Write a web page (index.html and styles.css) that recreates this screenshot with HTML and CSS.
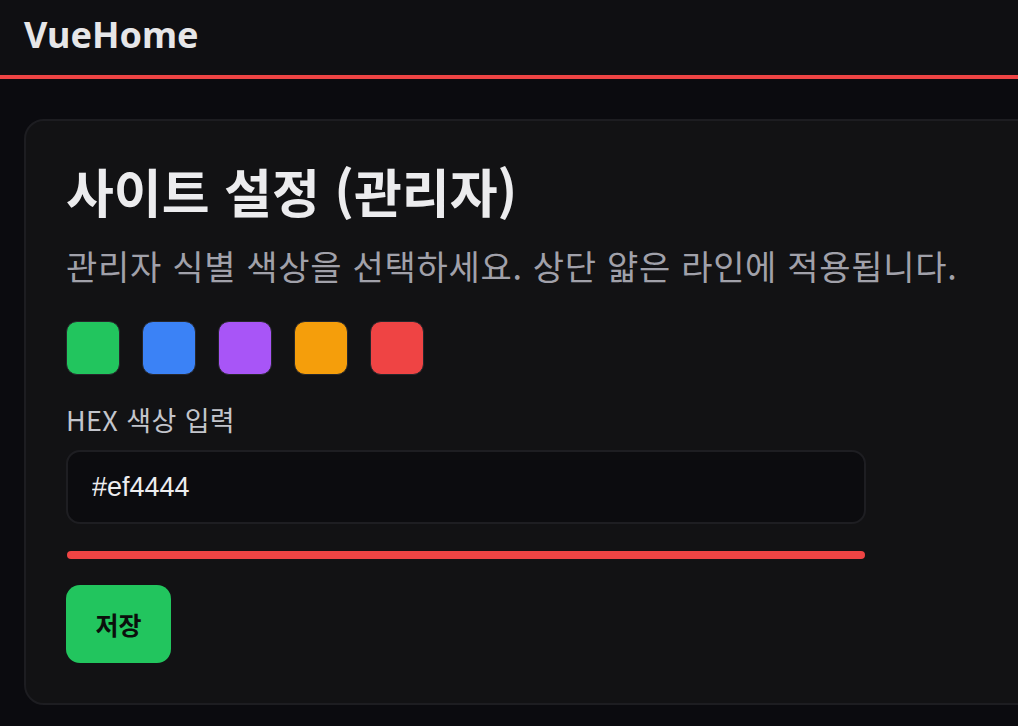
FILE: index.html
```html
<!DOCTYPE html>
<html lang="ko">
<head>
<meta charset="UTF-8" />
<title>VueHome - 사이트 설정</title>
<meta name="viewport" content="width=device-width, initial-scale=1.0">
<link rel="stylesheet" href="styles.css">
</head>
<body>

  <header class="topbar">
    <div class="brand">VueHome</div>
  </header>

  <main class="page">
    <section class="card">
      <h1 class="card-title">사이트 설정 (관리자)</h1>
      <p class="card-desc">관리자 식별 색상을 선택하세요. 상단 얇은 라인에 적용됩니다.</p>

      <div class="swatches">
        <button class="swatch swatch-green" title="#22c55e"></button>
        <button class="swatch swatch-blue" title="#3b82f6"></button>
        <button class="swatch swatch-purple" title="#a855f7"></button>
        <button class="swatch swatch-amber" title="#f59e0b"></button>
        <button class="swatch swatch-red" title="#ef4444"></button>
      </div>

      <label class="field-label" for="hexInput">HEX 색상 입력</label>
      <input class="hex-input" id="hexInput" type="text" value="#ef4444">

      <div class="preview-line"></div>

      <button class="save-btn">저장</button>
    </section>
  </main>

</body>
</html>
```

FILE: styles.css
```css
body {
  margin: 0;
  padding: 0;
  background-color: #0b0b0f;
  color: #e8e8ea;
  font-family: "Noto Sans", "Noto Sans CJK KR", sans-serif;
  overflow: hidden;
}
.topbar {
  height: 75px;
  background-color: #0f0f12;
  border-bottom: 4px solid #ef4444;
  display: flex;
  align-items: center;
  padding: 0 24px;
}
.brand {
  font-family: "Noto Sans", sans-serif;
  font-size: 36px;
  font-weight: 700;
  color: #e6e6e8;
  margin-top: -7px;
}
.page {
  padding: 40px 0 0 24px;
}
.card {
  width: 1100px;
  box-sizing: border-box;
  background-color: #121214;
  border: 2px solid #1d1d21;
  border-radius: 20px;
  padding: 39px 40px 40px 40px;
}
.card-title {
  font-family: "Noto Sans CJK KR", sans-serif;
  font-size: 52px;
  font-weight: 700;
  line-height: 62px;
  margin: 0;
  color: #ececee;
}
.card-desc {
  font-family: "Noto Sans CJK KR", sans-serif;
  font-size: 34px;
  font-weight: 400;
  letter-spacing: 0.7px;
  color: #a1a1aa;
  margin: 22px 0 0 0;
  line-height: 44px;
}
.swatches {
  display: flex;
  gap: 22px;
  margin-top: 33px;
}
.swatch {
  width: 54px;
  height: 54px;
  border-radius: 11px;
  border: 1px solid #26262b;
  padding: 0;
  cursor: pointer;
}
.swatch-green { background-color: #22c55e; }
.swatch-blue { background-color: #3b82f6; }
.swatch-purple { background-color: #a855f7; }
.swatch-amber { background-color: #f59e0b; }
.swatch-red { background-color: #ef4444; }
.field-label {
  display: block;
  font-family: "Noto Sans CJK KR", sans-serif;
  font-size: 27px;
  letter-spacing: 0.4px;
  color: #c3c5cc;
  margin-top: 27px;
  line-height: 36px;
}
.hex-input {
  display: block;
  box-sizing: border-box;
  width: 800px;
  height: 74px;
  margin-top: 12px;
  padding: 0 24px;
  background-color: #0c0c0f;
  border: 2px solid #1e1e22;
  border-radius: 14px;
  color: #ededef;
  font-family: "Liberation Sans", Arial, sans-serif;
  font-size: 27px;
  outline: none;
}
.preview-line {
  width: 798px;
  height: 8px;
  margin: 27px 0 0 1px;
  background-color: #ef4444;
  border-radius: 4px;
}
.save-btn {
  display: block;
  margin-top: 26px;
  width: 105px;
  height: 78px;
  border: none;
  border-radius: 14px;
  background-color: #22c55e;
  color: #0b0f0c;
  font-family: "Noto Sans CJK KR", sans-serif;
  font-size: 25px;
  font-weight: 700;
  cursor: pointer;
}
```
